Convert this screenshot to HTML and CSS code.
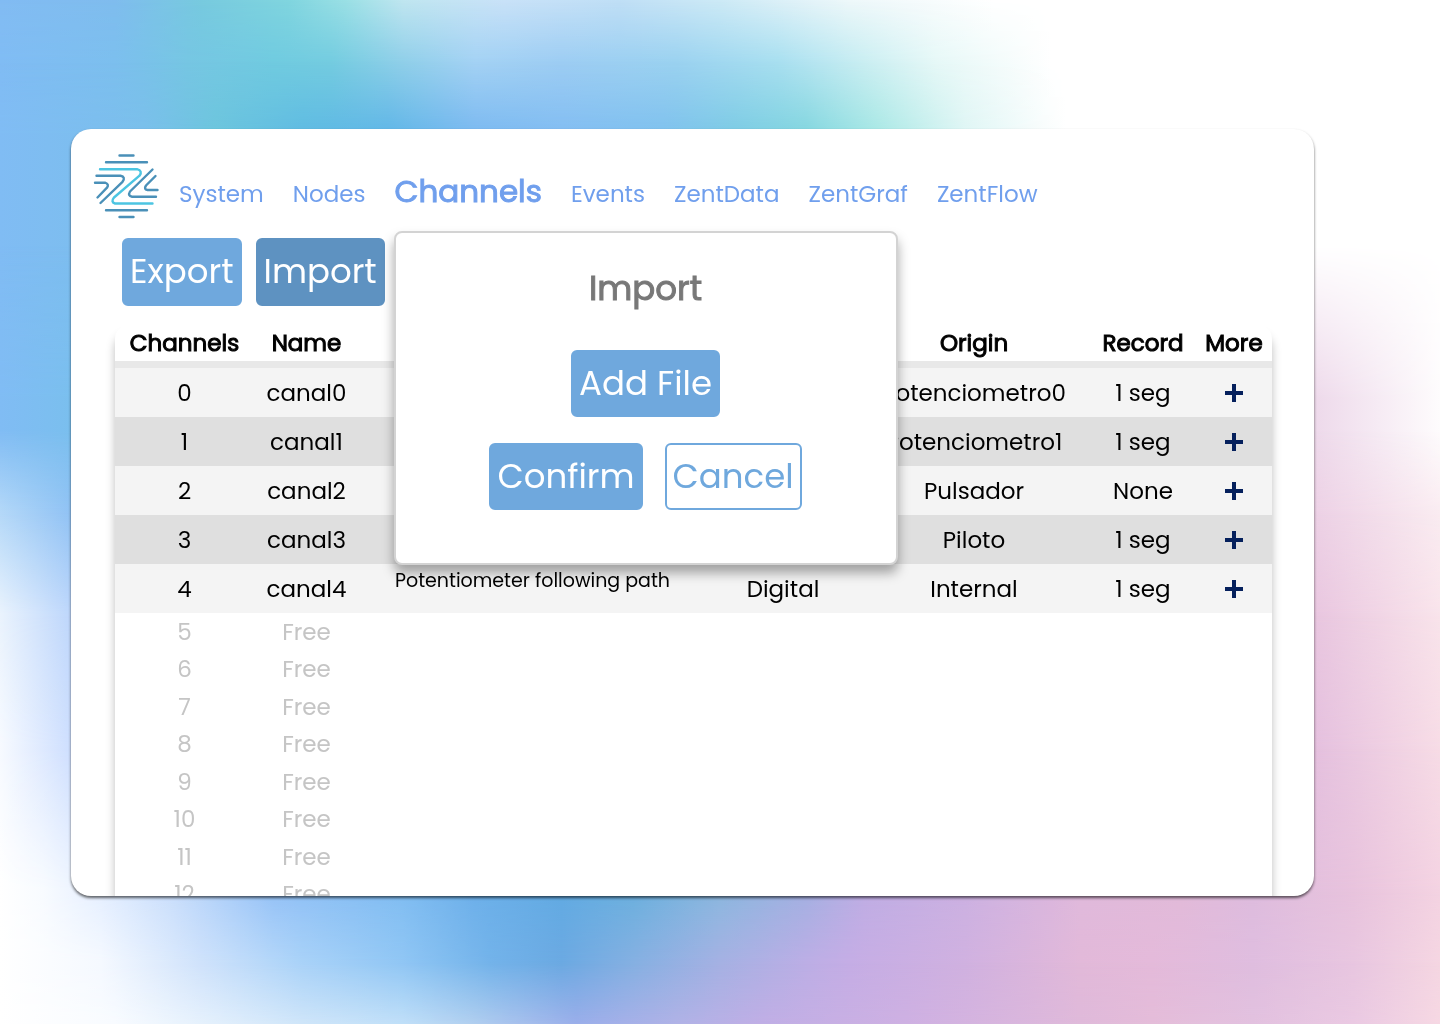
FILE: index.html
```html
<!DOCTYPE html>
<html lang="en">
<head>
<meta charset="utf-8">
<title>Channels</title>
<link rel="stylesheet" href="styles.css">
</head>
<body>
<div class="backdrop" aria-hidden="true">
  <i class="b1"></i><i class="b2"></i><i class="b3"></i><i class="b4"></i><i class="b5"></i><i class="b6"></i><i class="b7"></i><i class="b8"></i><i class="b9"></i><i class="b10"></i>
</div>
<main class="card">
  <header class="topbar">
    <svg class="logo" viewBox="0 0 66 66" fill="none" stroke-width="2.4" stroke-linecap="round" stroke-linejoin="round" aria-hidden="true">
      <g stroke="#4a90b8">
        <path d="M26.500 2.500h14M13 9.300h41M13 57.300h41M26.500 64h14"/>
        <path d="M3.500 22.800h24q5.500 1 2 6L7.500 50"/>
        <path d="M2 29.700h10q4.500 1.500 2 5L4.500 44.500"/>
        <path d="M59.500 16.500 37 38.500q-2.500 4.500 2 5.200H63"/>
        <path d="M62.500 23 53 32.500q-2.500 4 1.500 4.500H64.500"/>
      </g>
      <path stroke="#4cc5e2" d="M7 16.200h37q6 1.500 2.500 6.500L21 44.500q-3.500 4.500 1 6H59.500"/>
    </svg>
    <nav class="nav">
      <a href="#system">System</a>
      <a href="#nodes">Nodes</a>
      <a href="#channels" class="current" aria-current="page">Channels</a>
      <a href="#events">Events</a>
      <a href="#zentdata">ZentData</a>
      <a href="#zentgraf">ZentGraf</a>
      <a href="#zentflow">ZentFlow</a>
    </nav>
  </header>
  <div class="toolbar">
    <button class="btn" type="button">Export</button>
    <div class="menu">
      <button class="btn active" type="button" aria-expanded="true">Import</button>
      <section class="popup" role="dialog" aria-labelledby="popup-title">
        <h2 id="popup-title">Import</h2>
        <button class="btn" type="button">Add File</button>
        <div class="actions">
          <button class="btn" type="button">Confirm</button>
          <button class="btn outline" type="button">Cancel</button>
        </div>
      </section>
    </div>
  </div>
  <div class="table-wrap">
    <table class="channels">
      <colgroup><col class="c-id"><col class="c-name"><col class="c-desc"><col class="c-type"><col class="c-origin"><col class="c-record"><col class="c-more"></colgroup>
      <thead>
        <tr><th>Channels</th><th>Name</th><th></th><th></th><th>Origin</th><th>Record</th><th>More</th></tr>
      </thead>
      <tbody>
        <tr><td>0</td><td>canal0</td><td></td><td></td><td>Potenciometro0</td><td>1 seg</td><td><button class="more" type="button" aria-label="More"></button></td></tr>
        <tr><td>1</td><td>canal1</td><td></td><td></td><td>Potenciometro1</td><td>1 seg</td><td><button class="more" type="button" aria-label="More"></button></td></tr>
        <tr><td>2</td><td>canal2</td><td></td><td></td><td>Pulsador</td><td>None</td><td><button class="more" type="button" aria-label="More"></button></td></tr>
        <tr><td>3</td><td>canal3</td><td></td><td></td><td>Piloto</td><td>1 seg</td><td><button class="more" type="button" aria-label="More"></button></td></tr>
        <tr><td>4</td><td>canal4</td><td class="desc">Potentiometer following path</td><td>Digital</td><td>Internal</td><td>1 seg</td><td><button class="more" type="button" aria-label="More"></button></td></tr>
      </tbody>
      <tbody class="free">
        <tr><td>5</td><td>Free</td><td colspan="5"></td></tr>
        <tr><td>6</td><td>Free</td><td colspan="5"></td></tr>
        <tr><td>7</td><td>Free</td><td colspan="5"></td></tr>
        <tr><td>8</td><td>Free</td><td colspan="5"></td></tr>
        <tr><td>9</td><td>Free</td><td colspan="5"></td></tr>
        <tr><td>10</td><td>Free</td><td colspan="5"></td></tr>
        <tr><td>11</td><td>Free</td><td colspan="5"></td></tr>
        <tr><td>12</td><td>Free</td><td colspan="5"></td></tr>
      </tbody>
    </table>
  </div>
</main>
</body>
</html>
```
FILE: styles.css
```css
* { box-sizing: border-box; }

body {
  margin: 0;
  height: 100vh;
  padding: 129px 126px 128px 71px;
  overflow: hidden;
  font-family: Poppins, Inter, sans-serif;
  font-size: 23px;
  color: #000;
}

/* Colour mesh: each band fades in over the one above it, from --from to --to */
.backdrop { position: fixed; inset: 0; z-index: -1; }
.backdrop i {
  position: absolute;
  inset: 0;
  mask-image: linear-gradient(transparent var(--from), #000 var(--to));
}
.backdrop .b1 { mask-image: none; background: linear-gradient(90deg, #82bcf3, #7fbdee 8%, #77cadf 14%, #80d5df 20%, #9ae0e5 24%, #c0e6f0 28%, #c9e2f8 35%, #c0dff6 43%, #cdeaf6 50%, #eef8fa 59%, #fff 69%); }
.b2 { --from: 0%; --to: 6%; background: linear-gradient(90deg, #80bcf4, #7cbfee 8%, #76c6e3 13%, #70cbe0 19%, #74cce0 23%, #90cfe9 28%, #a4d2f4 33%, #9dcdf3 39%, #9bd2f0 47%, #a8dff0 54%, #caeef2 60%, #e6f8f7 65%, #fff 73%); }
.b3 { --from: 6%; --to: 13%; background: linear-gradient(90deg, #80bcf4, #7abfeb 10%, #6cc5dd 15%, #5fbbe2 21%, #60b6e7 27%, #7bb9f0 33%, #82bdf2 39%, #7fc1ee 46%, #7ccbe4 51%, #83d6df 56%, #a9e8e5 61%, #def5f4 67%, #fff 74%); }
.b4 { --from: 24%; --to: 39%; background: linear-gradient(90deg, #80bcf4, #7abfee 5%, #edd8ea 91%, #fefcfd); }
.b5 { --from: 42%; --to: 50%; background: linear-gradient(90deg, #b4d8f8, #90c2f4 5%, #ecd0e5 91%, #faecf1); }
.b6 { --from: 50%; --to: 60%; background: linear-gradient(90deg, #eaf3fd, #bdd6fb 5%, #e8c5df 91%, #f9e4eb); }
.b7 { --from: 60%; --to: 73%; background: linear-gradient(90deg, #f7faff, #cddefe 5%, #e4bfde 91%, #f7dce6); }
.b8 { --from: 73%; --to: 87%; background: linear-gradient(90deg, #fff, #f8fbff 3%, #e5efff 7%, #c9defc 12%, #95c2f7 19%, #80bdf2 28%, #6db0ea 33%, #62abe3 39%, #6bb0de 44%, #8bb8df 50%, #a4b0e2 56%, #bfade4 60%, #ccb1e2 67%, #e0b9dc 75%, #e2bad9 82%, #debcde 87%, #e8c3dd 94%, #f4d3e2); }
.b9 { --from: 87%; --to: 94%; background: linear-gradient(90deg, #fff, #f5f9ff 7%, #cfe2fb 14%, #a9d2f8 21%, #90c6f4 28%, #73b3ea 34%, #6ba9e2 39%, #85b0e2 44%, #a5b1e3 50%, #bcaee5 56%, #c5ade5 59%, #d0b1e0 67%, #e2b9d9 75%, #e4bada 80%, #dfbddf 87%, #e8c6e0 94%, #f5d6e2); }
.b10 { --from: 94%; --to: 100%; background: linear-gradient(90deg, #fff, #f8fbff 8%, #e2effc 15%, #cfe5f9 21%, #c0dff8 28%, #b0ceef 33%, #9aaeea 40%, #b0b2e6 47%, #c0aee5 53%, #ceb0e2 63%, #dfb9da 75%, #e4bcd9 80%, #e2c1df 87%, #eac9e2 94%, #f6d8e3); }

.card {
  height: 100%;
  padding: 24px 42px 0 44px;
  overflow: hidden;
  background: #fff;
  border-radius: 20px;
  box-shadow: 0 2px 3px rgba(0, 0, 0, .6);
}

.topbar { display: flex; gap: 20px; margin-left: -22px; height: 82px; }
.logo { width: 66px; height: 66px; flex: none; }

.nav { display: flex; align-items: baseline; gap: 29px; height: 66px; padding-top: 18px; }
.nav a { color: #709fed; text-decoration: none; line-height: 40px; }

.nav .current { font-size: 31px; }

.current, th, .popup h2 { font-weight: 400; -webkit-text-stroke: 1px currentColor; }

.toolbar { display: flex; gap: 14px; margin: 3px 7px 19px; }
.menu { position: relative; }

.btn {
  height: 68px;
  padding: 0 6px 2px;
  border: 2px solid #6fa8dd;
  border-radius: 6px;
  background: #6fa8dd;
  color: #fff;
  font: inherit;
  font-size: 34px;
}
.btn.active { background: #5e92c1; border-color: #5e92c1; }
.btn.outline { background: #fff; color: #6fa8dd; }

.popup {
  position: absolute;
  z-index: 2;
  left: 138px;
  top: -7px;
  width: 504px;
  height: 334px;
  padding-top: 31px;
  display: flex;
  flex-direction: column;
  align-items: center;
  gap: 26px;
  background: #fff;
  border: 2px solid #d3d3d3;
  border-radius: 8px;
  box-shadow: 0 8px 12px rgba(0, 0, 0, .34);
}
.popup h2 { margin: 0 0 12px; font-size: 34px; line-height: 48px; color: #787878; }
.popup .btn { height: 67px; padding-bottom: 0; }
.actions { display: flex; gap: 22px; }

.table-wrap { border-radius: 14px 14px 0 0; box-shadow: 0 10px 10px rgba(0, 0, 0, .26); }
.channels { width: 100%; table-layout: fixed; border-collapse: separate; border-spacing: 0; }
.c-id { width: 139px; }
.c-name { width: 105px; }
.c-type { width: 150px; }
.c-origin { width: 232px; }
.c-record { width: 106px; }
.c-more { width: 76px; }

th, td { padding: 0; text-align: center; white-space: nowrap; }
th { height: 43px; border-bottom: 7px solid #e8e8e8; }
tbody td { height: 49px; background: #f4f4f4; }
tbody tr:nth-child(even) td { background: #dfdfdf; }
.free td { height: 37px; background: #fff; color: #c5c5c5; }
.free tr:nth-child(even) td { height: 38px; background: #fff; }
.channels .desc { font-size: 19px; vertical-align: top; text-align: left; padding: 2px 0 0 36px; }

.more {
  display: block;
  width: 18px;
  height: 18px;
  margin: auto;
  padding: 0;
  border: 0;
  background:
    linear-gradient(#05205c, #05205c) center / 18px 4px no-repeat,
    linear-gradient(#05205c, #05205c) center / 4px 18px no-repeat;
}
```
